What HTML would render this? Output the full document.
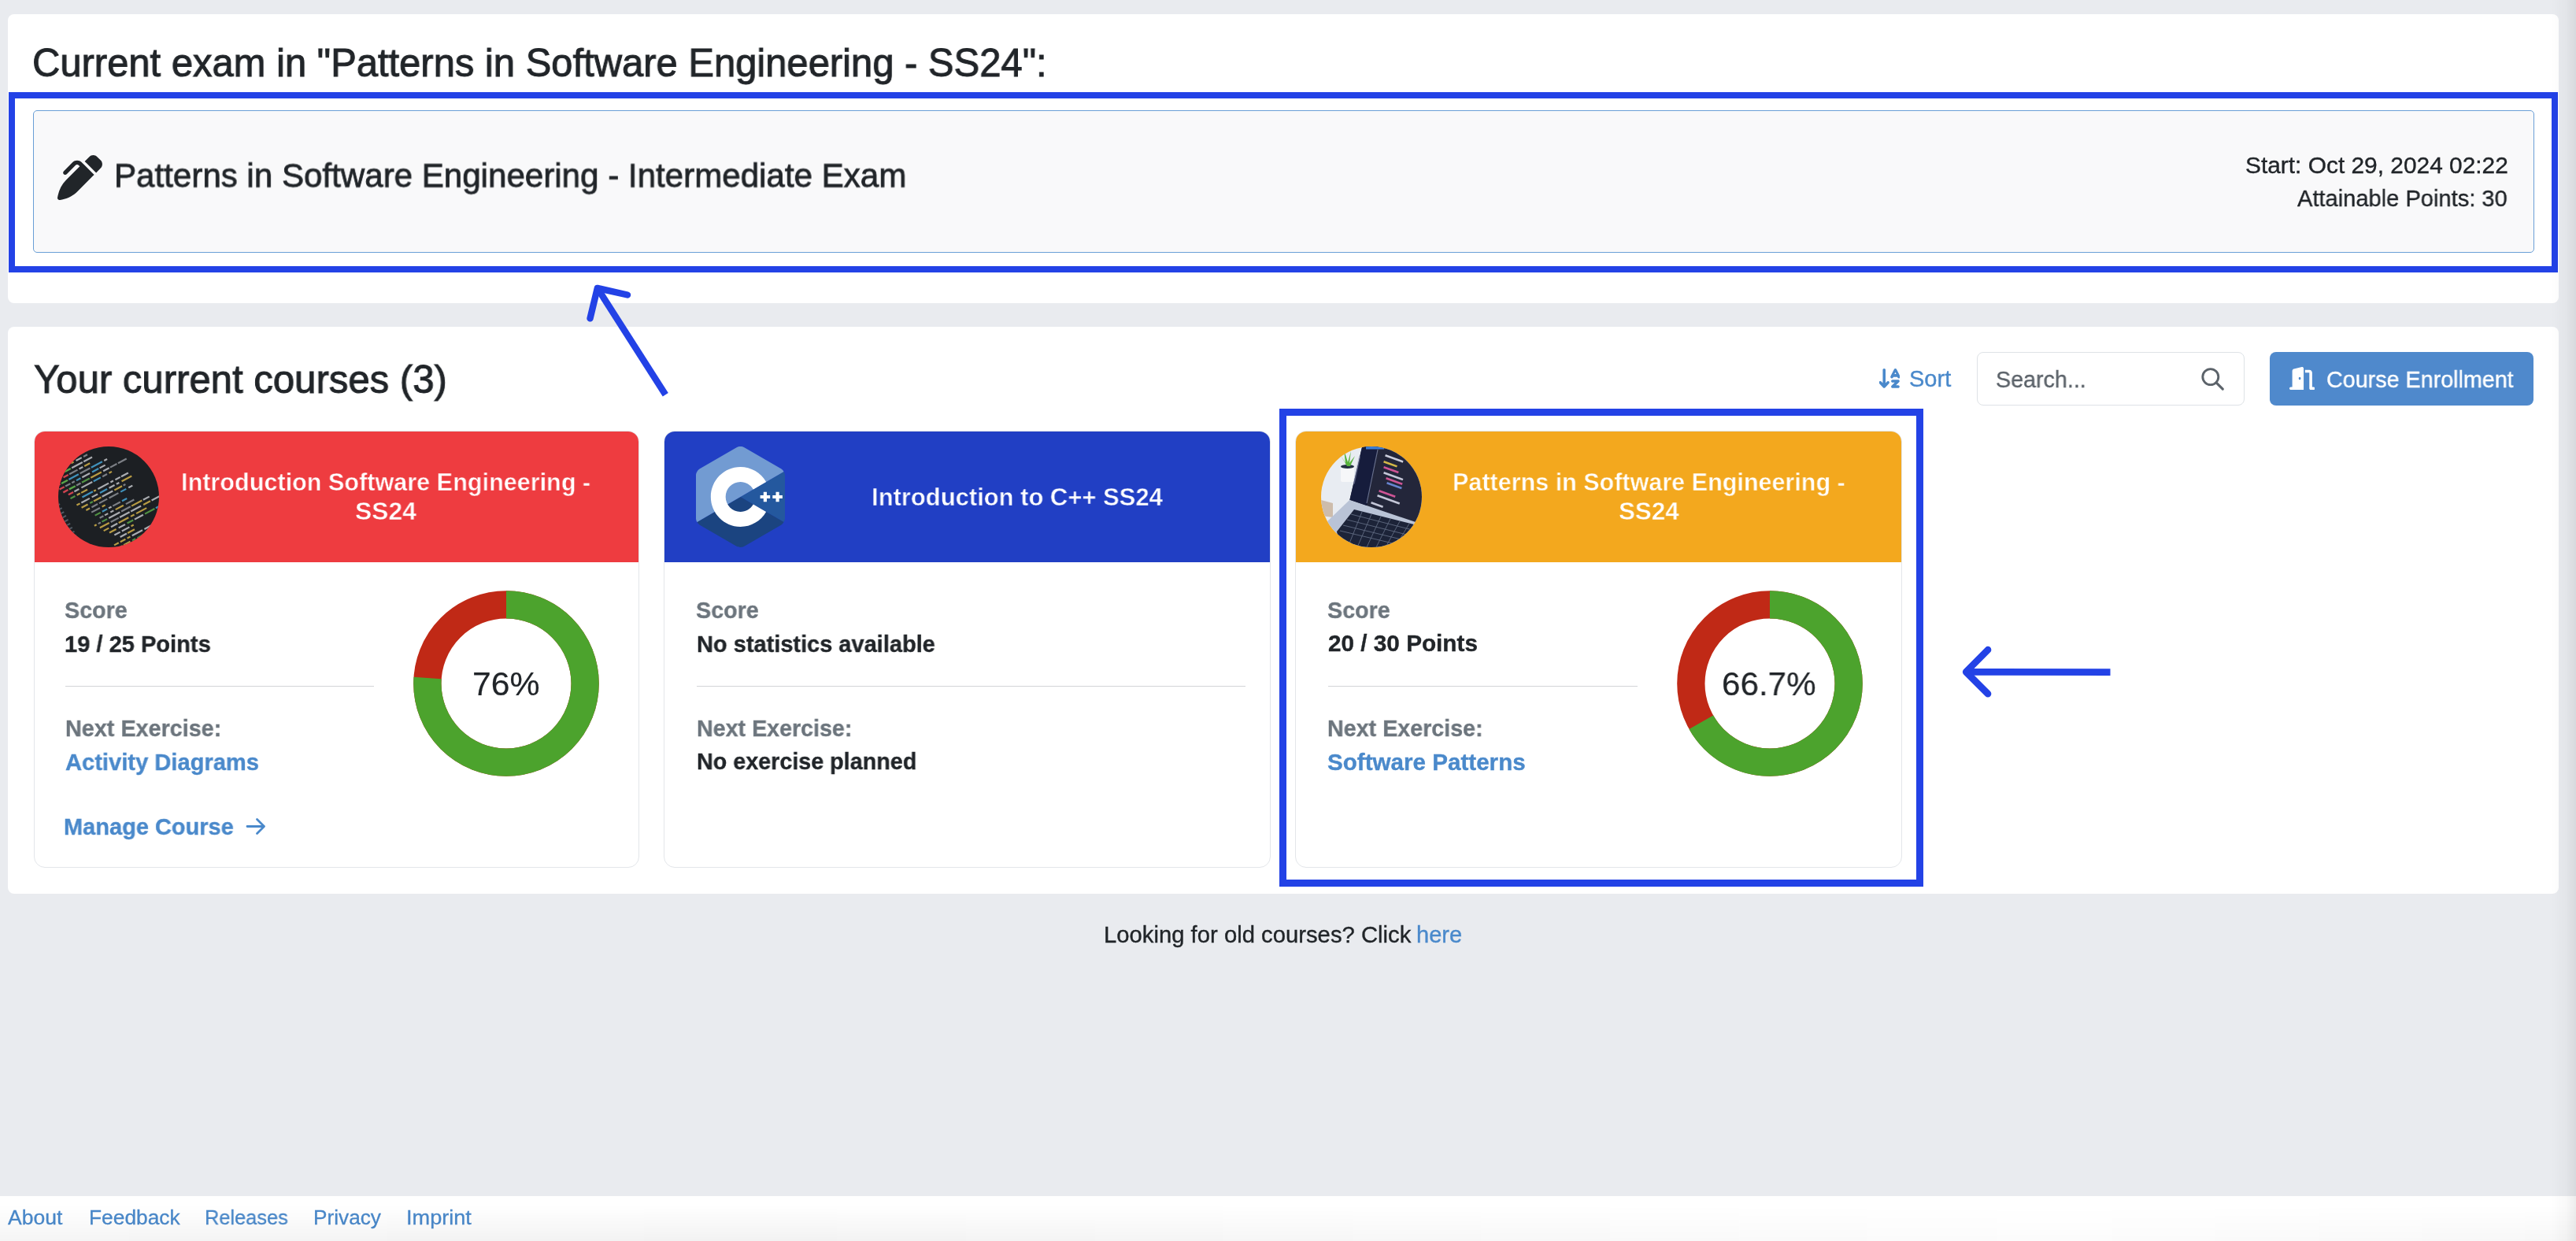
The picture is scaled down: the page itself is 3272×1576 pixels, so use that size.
<!DOCTYPE html><html><head><meta charset="utf-8"><style>
html,body{margin:0;padding:0;}
body{width:3272px;height:1576px;background:#e9ebef;position:relative;overflow:hidden;font-family:"Liberation Sans",sans-serif;}
.a{position:absolute;box-sizing:border-box;}
.t{position:absolute;white-space:nowrap;will-change:transform;}
</style></head><body>
<div class="a" style="left:9.9px;top:17.6px;width:3240.1px;height:367.2px;background:#fff;border-radius:8px"></div>
<div class="a" style="left:9.9px;top:415px;width:3240.1px;height:720px;background:#fff;border-radius:8px"></div>
<div class="t" style="left:41.12px;top:50.79px;font-size:50.50px;line-height:58.02px;-webkit-text-stroke:1.00px #212529;color:#212529;transform:scale(0.9690,1.0000);transform-origin:0 46.51px;">Current exam in "Patterns in Software Engineering - SS24":</div>
<div class="a" style="left:41.5px;top:140px;width:3177px;height:181px;background:#f9f9fa;border:1.3px solid #6a9fd6;border-radius:5px"></div>
<div class="a" style="left:11px;top:117px;width:3238px;height:229.3px;border:8.8px solid #2342e6"></div>
<svg class="a" style="left:73px;top:196.5px" width="57" height="57" viewBox="0 0 512 512"><path fill="#212529" d="M453.3 19.3l39.4 39.4c25 25 25 65.5 0 90.5l-52.1 52.1-1-1-16-16-96-96-17-17 52.1-52.1c25-25 65.5-25 90.5 0zM241 114.9c-9.4-9.4-24.6-9.4-33.9 0L105 217c-9.4 9.4-24.6 9.4-33.9 0s-9.4-24.6 0-33.9L173.1 81c28.1-28.1 73.7-28.1 101.8 0L288 94.1l17 17 96 96 16 16 1 1-17 17L229.5 412.5c-48 48-109.2 80.8-175.8 94.1l-25 5c-7.9 1.6-16-.9-21.7-6.6s-8.1-13.8-6.6-21.7l5-25c13.3-66.6 46.1-127.8 94.1-175.8L254.1 128 241 114.9z"/></svg>
<div class="t" style="left:145.18px;top:198.76px;font-size:42.50px;line-height:48.83px;-webkit-text-stroke:0.80px #212529;color:#212529;transform:scale(0.9906,1.0150);transform-origin:0 39.14px;">Patterns in Software Engineering - Intermediate Exam</div>
<div class="t" style="left:2851.82px;top:192.63px;font-size:29.50px;line-height:33.90px;-webkit-text-stroke:0.35px #212529;color:#212529;transform:scale(1.0128,1.0000);transform-origin:0 27.17px;">Start: Oct 29, 2024 02:22</div>
<div class="t" style="left:2917.76px;top:234.73px;font-size:29.50px;line-height:33.90px;-webkit-text-stroke:0.35px #212529;color:#212529;transform:scale(0.9856,1.0000);transform-origin:0 27.17px;">Attainable Points: 30</div>
<div class="t" style="left:42.76px;top:453.09px;font-size:50.50px;line-height:58.02px;-webkit-text-stroke:1.00px #212529;color:#212529;transform:scale(0.9723,1.0000);transform-origin:0 46.51px;">Your current courses (3)</div>
<svg class="a" style="left:2386.8px;top:468px" width="26.5" height="24.8" viewBox="48 32 477 448" preserveAspectRatio="none"><path fill="#4a89cb" d="M183.6 469.6C177.5 476.2 169 480 160 480s-17.5-3.8-23.6-10.4l-88-96c-11.9-13-11.1-33.3 2-45.2s33.3-11.1 45.2 2L128 365.7 128 64c0-17.7 14.3-32 32-32s32 14.3 32 32l0 301.7 32.4-35.4c11.9-13 32.2-13.9 45.2-2s13.9 32.2 2 45.2l-88 96zM320 320c0-17.7 14.3-32 32-32l128 0c12.9 0 24.6 7.8 29.6 19.8s2.2 25.7-6.9 34.9L429.3 416l50.7 0c17.7 0 32 14.3 32 32s-14.3 32-32 32l-128 0c-12.9 0-24.6-7.8-29.6-19.8s-2.2-25.7 6.9-34.9L402.7 352 352 352c-17.7 0-32-14.3-32-32zM416 32c12.1 0 23.2 6.8 28.6 17.7l64 128 16 32c7.9 15.8 1.5 35-14.3 42.9s-35 1.5-42.9-14.3L460.2 224l-88.4 0-7.2 14.3c-7.9 15.8-27.1 22.2-42.9 14.3s-22.2-27.1-14.3-42.9l16-32 64-128C392.8 38.8 403.9 32 416 32zM395.8 160l40.4 0L416 119.6 395.8 160z"/></svg>
<div class="t" style="left:2425.20px;top:464.99px;font-size:29.00px;line-height:33.32px;-webkit-text-stroke:0.35px #4a89cb;color:#4a89cb;transform:scale(0.9914,1.0000);transform-origin:0 26.71px;">Sort</div>
<div class="a" style="left:2511px;top:447px;width:340px;height:68px;background:#fff;border:1.5px solid #dee2e6;border-radius:8px"></div>
<div class="t" style="left:2535.30px;top:464.83px;font-size:29.50px;line-height:33.90px;-webkit-text-stroke:0.35px #5c636a;color:#5c636a;transform:scale(0.9719,1.0000);transform-origin:0 27.17px;">Search...</div>
<svg class="a" style="left:2794px;top:464.5px" width="34" height="34" viewBox="0 0 34 34"><circle cx="13.8" cy="13.6" r="10" fill="none" stroke="#5c636a" stroke-width="2.9"/><line x1="21" y1="20.8" x2="29.3" y2="29.1" stroke="#5c636a" stroke-width="3.1" stroke-linecap="round"/></svg>
<div class="a" style="left:2883px;top:447px;width:335px;height:68px;background:#4f89cc;border-radius:8px"></div>
<svg class="a" style="left:2907.5px;top:466px" width="32.5" height="29" viewBox="0 0 576 512" preserveAspectRatio="none"><path fill="#fff" d="M320 32c0-9.9-4.5-19.2-12.3-25.2S289.8-1.4 280.2 1l-179.9 45C79 51.3 64 70.5 64 92.5L64 448l-32 0c-17.7 0-32 14.3-32 32s14.3 32 32 32l64 0 192 0 32 0 0-32 0-448zM256 256c0 17.7-10.7 32-24 32s-24-14.3-24-32s10.7-32 24-32s24 14.3 24 32zm96-128l96 0 0 352c0 17.7 14.3 32 32 32l64 0c17.7 0 32-14.3 32-32s-14.3-32-32-32l-32 0 0-320c0-35.3-28.7-64-64-64l-96 0 0 64z"/></svg>
<div class="t" style="left:2954.68px;top:464.83px;font-size:29.50px;line-height:33.90px;-webkit-text-stroke:0.35px #fff;color:#fff;transform:scale(0.9730,1.0000);transform-origin:0 27.17px;">Course Enrollment</div>
<div class="a" style="left:42.6px;top:546.7px;width:769.0px;height:555.8px;border:1.4px solid #e3e6ea;border-radius:14px;background:#fff;overflow:hidden"><div style="position:absolute;left:-1.4px;top:-1.4px;right:-1.4px;height:167.5px;background:#ee3c40"></div></div>
<div class="a" style="left:843.4px;top:546.7px;width:770.6px;height:555.8px;border:1.4px solid #e3e6ea;border-radius:14px;background:#fff;overflow:hidden"><div style="position:absolute;left:-1.4px;top:-1.4px;right:-1.4px;height:167.5px;background:#213fc4"></div></div>
<div class="a" style="left:1645.4px;top:546.7px;width:770.2px;height:555.8px;border:1.4px solid #e3e6ea;border-radius:14px;background:#fff;overflow:hidden"><div style="position:absolute;left:-1.4px;top:-1.4px;right:-1.4px;height:167.5px;background:#f3a81e"></div></div>
<div class="t" style="left:229.98px;top:594.43px;font-size:32.00px;line-height:36.77px;font-weight:700;-webkit-text-stroke:0.45px #ee3c40;color:#fff;transform:scale(0.9562,1.0000);transform-origin:0 29.47px;">Introduction Software Engineering -</div>
<div class="t" style="left:451.06px;top:631.43px;font-size:32.00px;line-height:36.77px;font-weight:700;-webkit-text-stroke:0.45px #ee3c40;color:#fff;transform:scale(0.9931,1.0000);transform-origin:0 29.47px;">SS24</div>
<div class="t" style="left:81.68px;top:758.13px;font-size:29.50px;line-height:33.90px;font-weight:700;-webkit-text-stroke:0.35px #6c757d;color:#6c757d;transform:scale(0.9735,1.0000);transform-origin:0 27.17px;">Score</div>
<div class="t" style="left:81.68px;top:800.83px;font-size:29.50px;line-height:33.90px;font-weight:700;-webkit-text-stroke:0.35px #212529;color:#212529;transform:scale(0.9851,1.0000);transform-origin:0 27.17px;">19 / 25 Points</div>
<div class="a" style="left:82.5px;top:870.9px;width:392.4px;height:1.1px;background:#d3d4d8"></div>
<div class="t" style="left:82.58px;top:907.83px;font-size:29.50px;line-height:33.90px;font-weight:700;-webkit-text-stroke:0.35px #6c757d;color:#6c757d;transform:scale(0.9751,1.0000);transform-origin:0 27.17px;">Next Exercise:</div>
<div class="t" style="left:82.52px;top:950.53px;font-size:29.50px;line-height:33.90px;font-weight:700;-webkit-text-stroke:0.35px #4a89cb;color:#4a89cb;transform:scale(0.9872,1.0000);transform-origin:0 27.17px;">Activity Diagrams</div>
<div class="t" style="left:80.98px;top:1032.63px;font-size:29.50px;line-height:33.90px;font-weight:700;-webkit-text-stroke:0.35px #4a89cb;color:#4a89cb;transform:scale(0.9825,1.0000);transform-origin:0 27.17px;">Manage Course</div>
<svg class="a" style="left:311px;top:1036.5px" width="28" height="25" viewBox="0 0 28 25"><path d="M3 12.5H24.5M15.5 3.5L24.5 12.5L15.5 21.5" fill="none" stroke="#4a89cb" stroke-width="2.8" stroke-linecap="round" stroke-linejoin="round"/></svg>
<div class="t" style="left:1107.40px;top:612.83px;font-size:32.00px;line-height:36.77px;font-weight:700;-webkit-text-stroke:0.45px #213fc4;color:#fff;transform:scale(0.9673,1.0000);transform-origin:0 29.47px;">Introduction to C++ SS24</div>
<div class="t" style="left:884.06px;top:757.93px;font-size:29.50px;line-height:33.90px;font-weight:700;-webkit-text-stroke:0.35px #6c757d;color:#6c757d;transform:scale(0.9735,1.0000);transform-origin:0 27.17px;">Score</div>
<div class="t" style="left:884.96px;top:800.83px;font-size:29.50px;line-height:33.90px;font-weight:700;-webkit-text-stroke:0.35px #212529;color:#212529;transform:scale(0.9824,1.0000);transform-origin:0 27.17px;">No statistics available</div>
<div class="a" style="left:884.5px;top:870.9px;width:697.4px;height:1.1px;background:#d3d4d8"></div>
<div class="t" style="left:884.96px;top:907.63px;font-size:29.50px;line-height:33.90px;font-weight:700;-webkit-text-stroke:0.35px #6c757d;color:#6c757d;transform:scale(0.9707,1.0000);transform-origin:0 27.17px;">Next Exercise:</div>
<div class="t" style="left:884.96px;top:950.33px;font-size:29.50px;line-height:33.90px;font-weight:700;-webkit-text-stroke:0.35px #212529;color:#212529;transform:scale(0.9734,1.0000);transform-origin:0 27.17px;">No exercise planned</div>
<div class="t" style="left:1845.26px;top:594.03px;font-size:32.00px;line-height:36.77px;font-weight:700;-webkit-text-stroke:0.45px #f3a81e;color:#fff;transform:scale(0.9540,1.0000);transform-origin:0 29.47px;">Patterns in Software Engineering -</div>
<div class="t" style="left:2056.06px;top:631.43px;font-size:32.00px;line-height:36.77px;font-weight:700;-webkit-text-stroke:0.45px #f3a81e;color:#fff;transform:scale(0.9785,1.0000);transform-origin:0 29.47px;">SS24</div>
<div class="t" style="left:1686.06px;top:758.23px;font-size:29.50px;line-height:33.90px;font-weight:700;-webkit-text-stroke:0.35px #6c757d;color:#6c757d;transform:scale(0.9735,1.0000);transform-origin:0 27.17px;">Score</div>
<div class="t" style="left:1687.24px;top:800.43px;font-size:29.50px;line-height:33.90px;font-weight:700;-webkit-text-stroke:0.35px #212529;color:#212529;transform:scale(1.0074,1.0000);transform-origin:0 27.17px;">20 / 30 Points</div>
<div class="a" style="left:1686.5px;top:870.9px;width:393.4px;height:1.1px;background:#d3d4d8"></div>
<div class="t" style="left:1686.44px;top:907.73px;font-size:29.50px;line-height:33.90px;font-weight:700;-webkit-text-stroke:0.35px #6c757d;color:#6c757d;transform:scale(0.9719,1.0000);transform-origin:0 27.17px;">Next Exercise:</div>
<div class="t" style="left:1686.06px;top:950.53px;font-size:29.50px;line-height:33.90px;font-weight:700;-webkit-text-stroke:0.35px #4a89cb;color:#4a89cb;transform:scale(1.0034,1.0000);transform-origin:0 27.17px;">Software Patterns</div>
<svg class="a" style="left:518.3px;top:743.1px" width="250" height="250" viewBox="0 0 250 250"><circle cx="125" cy="125" r="100.15" fill="none" stroke="#c02916" stroke-width="35.3"/><circle cx="125" cy="125" r="100.15" fill="none" stroke="#4ca32d" stroke-width="35.3" stroke-dasharray="478.24 629.26" transform="rotate(-90 125 125)"/></svg>
<svg class="a" style="left:2123.2px;top:743.1px" width="250" height="250" viewBox="0 0 250 250"><circle cx="125" cy="125" r="100.15" fill="none" stroke="#c02916" stroke-width="35.3"/><circle cx="125" cy="125" r="100.15" fill="none" stroke="#4ca32d" stroke-width="35.3" stroke-dasharray="419.72 629.26" transform="rotate(-90 125 125)"/></svg>
<div class="t" style="left:600.40px;top:845.46px;font-size:42.50px;line-height:48.83px;-webkit-text-stroke:0.20px #212529;color:#212529;transform:scale(1.0068,1.0000);transform-origin:0 39.14px;">76%</div>
<div class="t" style="left:2186.88px;top:845.46px;font-size:42.50px;line-height:48.83px;-webkit-text-stroke:0.20px #212529;color:#212529;transform:scale(0.9925,1.0000);transform-origin:0 39.14px;">66.7%</div>
<svg class="a" style="left:73.5px;top:567.2px" width="128" height="128" viewBox="0 0 128 128"><defs><clipPath id="c1"><circle cx="64" cy="64" r="64"/></clipPath></defs><g clip-path="url(#c1)"><rect width="128" height="128" fill="#1c1f23"/><g transform="rotate(-28 64 64) translate(-6 -10)"><rect x="6" y="-4.0" width="5" height="2" fill="#6b7480" opacity="0.7"/><rect x="17.4" y="-4.0" width="14.1" height="2.2" fill="#d2b24a" opacity="0.85"/><rect x="33.7" y="-4.0" width="14.1" height="2.2" fill="#8d9196" opacity="0.85"/><rect x="49.5" y="-4.0" width="9.7" height="2.2" fill="#46a6d6" opacity="0.85"/><rect x="62.2" y="-4.0" width="4.2" height="2.2" fill="#8d9196" opacity="0.85"/><rect x="67.9" y="-4.0" width="10.0" height="2.2" fill="#c3c6ca" opacity="0.85"/><rect x="80.5" y="-4.0" width="8.2" height="2.2" fill="#d2b24a" opacity="0.85"/><rect x="6" y="1.6" width="5" height="2" fill="#6b7480" opacity="0.7"/><rect x="20.3" y="1.6" width="11.1" height="2.2" fill="#5aa84a" opacity="0.85"/><rect x="32.8" y="1.6" width="3.5" height="2.2" fill="#8d9196" opacity="0.85"/><rect x="38.8" y="1.6" width="13.1" height="2.2" fill="#d2b24a" opacity="0.85"/><rect x="6" y="7.2" width="5" height="2" fill="#6b7480" opacity="0.7"/><rect x="23.5" y="7.2" width="7" height="2.3" fill="#cf4450"/><rect x="32.0" y="7.2" width="9" height="2.3" fill="#5aa84a"/><rect x="42.5" y="7.2" width="6.0" height="2.2" fill="#8d9196" opacity="0.85"/><rect x="50.9" y="7.2" width="11.6" height="2.2" fill="#d2b24a" opacity="0.85"/><rect x="65.2" y="7.2" width="8.3" height="2.2" fill="#5aa84a" opacity="0.85"/><rect x="77.0" y="7.2" width="13.9" height="2.2" fill="#8d9196" opacity="0.85"/><rect x="92.9" y="7.2" width="6.0" height="2.2" fill="#8d9196" opacity="0.85"/><rect x="100.1" y="7.2" width="10.3" height="2.2" fill="#c3c6ca" opacity="0.85"/><rect x="6" y="12.8" width="5" height="2" fill="#6b7480" opacity="0.7"/><rect x="26.0" y="12.8" width="7" height="2.3" fill="#cf4450"/><rect x="34.5" y="12.8" width="3.9" height="2.2" fill="#c3c6ca" opacity="0.85"/><rect x="41.6" y="12.8" width="3.0" height="2.2" fill="#8d9196" opacity="0.85"/><rect x="47.9" y="12.8" width="3.7" height="2.2" fill="#d2b24a" opacity="0.85"/><rect x="55.0" y="12.8" width="8.2" height="2.2" fill="#c3c6ca" opacity="0.85"/><rect x="65.7" y="12.8" width="5.6" height="2.2" fill="#8d9196" opacity="0.85"/><rect x="6" y="18.4" width="5" height="2" fill="#6b7480" opacity="0.7"/><rect x="26.9" y="18.4" width="7" height="2.3" fill="#cf4450"/><rect x="35.4" y="18.4" width="9" height="2.3" fill="#5aa84a"/><rect x="45.9" y="18.4" width="15.5" height="2.2" fill="#c3c6ca" opacity="0.85"/><rect x="63.0" y="18.4" width="12.2" height="2.2" fill="#c3c6ca" opacity="0.85"/><rect x="6" y="24.0" width="5" height="2" fill="#6b7480" opacity="0.7"/><rect x="30.9" y="24.0" width="7" height="2.3" fill="#cf4450"/><rect x="39.4" y="24.0" width="11.9" height="2.2" fill="#8d9196" opacity="0.85"/><rect x="53.5" y="24.0" width="5.5" height="2.2" fill="#c3c6ca" opacity="0.85"/><rect x="61.1" y="24.0" width="8.0" height="2.2" fill="#d2b24a" opacity="0.85"/><rect x="6" y="29.6" width="5" height="2" fill="#6b7480" opacity="0.7"/><rect x="16.6" y="29.6" width="7" height="2.3" fill="#cf4450"/><rect x="25.1" y="29.6" width="9" height="2.3" fill="#5aa84a"/><rect x="35.6" y="29.6" width="14.2" height="2.2" fill="#46a6d6" opacity="0.85"/><rect x="51.8" y="29.6" width="14.5" height="2.2" fill="#8d9196" opacity="0.85"/><rect x="67.9" y="29.6" width="15.9" height="2.2" fill="#46a6d6" opacity="0.85"/><rect x="86.5" y="29.6" width="4.3" height="2.2" fill="#c3c6ca" opacity="0.85"/><rect x="6" y="35.2" width="5" height="2" fill="#6b7480" opacity="0.7"/><rect x="19.3" y="35.2" width="7" height="2.3" fill="#cf4450"/><rect x="27.8" y="35.2" width="7.3" height="2.2" fill="#8d9196" opacity="0.85"/><rect x="37.1" y="35.2" width="4.0" height="2.2" fill="#8d9196" opacity="0.85"/><rect x="43.6" y="35.2" width="6.2" height="2.2" fill="#46a6d6" opacity="0.85"/><rect x="51.9" y="35.2" width="11.1" height="2.2" fill="#c3c6ca" opacity="0.85"/><rect x="66.3" y="35.2" width="9.3" height="2.2" fill="#46a6d6" opacity="0.85"/><rect x="77.1" y="35.2" width="8.0" height="2.2" fill="#c3c6ca" opacity="0.85"/><rect x="6" y="40.8" width="5" height="2" fill="#6b7480" opacity="0.7"/><rect x="21.7" y="40.8" width="7" height="2.3" fill="#cf4450"/><rect x="30.2" y="40.8" width="9" height="2.3" fill="#5aa84a"/><rect x="40.7" y="40.8" width="6.2" height="2.2" fill="#8d9196" opacity="0.85"/><rect x="48.5" y="40.8" width="11.2" height="2.2" fill="#5aa84a" opacity="0.85"/><rect x="61.3" y="40.8" width="15.4" height="2.2" fill="#d2b24a" opacity="0.85"/><rect x="79.3" y="40.8" width="8.5" height="2.2" fill="#c3c6ca" opacity="0.85"/><rect x="89.2" y="40.8" width="9.7" height="2.2" fill="#8d9196" opacity="0.85"/><rect x="100.6" y="40.8" width="12.2" height="2.2" fill="#8d9196" opacity="0.85"/><rect x="6" y="46.4" width="5" height="2" fill="#6b7480" opacity="0.7"/><rect x="26.2" y="46.4" width="7" height="2.3" fill="#cf4450"/><rect x="34.7" y="46.4" width="6.8" height="2.2" fill="#c3c6ca" opacity="0.85"/><rect x="44.9" y="46.4" width="15.7" height="2.2" fill="#c3c6ca" opacity="0.85"/><rect x="62.3" y="46.4" width="10.3" height="2.2" fill="#46a6d6" opacity="0.85"/><rect x="75.2" y="46.4" width="6.6" height="2.2" fill="#8d9196" opacity="0.85"/><rect x="84.7" y="46.4" width="3.9" height="2.2" fill="#d2b24a" opacity="0.85"/><rect x="6" y="52.0" width="5" height="2" fill="#6b7480" opacity="0.7"/><rect x="26.2" y="52.0" width="6.7" height="2.2" fill="#5aa84a" opacity="0.85"/><rect x="35.4" y="52.0" width="4.7" height="2.2" fill="#d2b24a" opacity="0.85"/><rect x="41.6" y="52.0" width="8.9" height="2.2" fill="#d2b24a" opacity="0.85"/><rect x="6" y="57.6" width="5" height="2" fill="#6b7480" opacity="0.7"/><rect x="40.1" y="57.6" width="15.3" height="2.2" fill="#46a6d6" opacity="0.85"/><rect x="56.7" y="57.6" width="3.2" height="2.2" fill="#d2b24a" opacity="0.85"/><rect x="62.7" y="57.6" width="15.5" height="2.2" fill="#c3c6ca" opacity="0.85"/><rect x="80.8" y="57.6" width="4.0" height="2.2" fill="#c3c6ca" opacity="0.85"/><rect x="87.7" y="57.6" width="7.1" height="2.2" fill="#c3c6ca" opacity="0.85"/><rect x="96.2" y="57.6" width="10.1" height="2.2" fill="#c3c6ca" opacity="0.85"/><rect x="6" y="63.2" width="5" height="2" fill="#6b7480" opacity="0.7"/><rect x="29.2" y="63.2" width="4.7" height="2.2" fill="#d2b24a" opacity="0.85"/><rect x="35.9" y="63.2" width="11.9" height="2.2" fill="#c3c6ca" opacity="0.85"/><rect x="51.0" y="63.2" width="8.4" height="2.2" fill="#c3c6ca" opacity="0.85"/><rect x="62.6" y="63.2" width="10.4" height="2.2" fill="#46a6d6" opacity="0.85"/><rect x="75.8" y="63.2" width="7.9" height="2.2" fill="#c3c6ca" opacity="0.85"/><rect x="86.3" y="63.2" width="4.0" height="2.2" fill="#c3c6ca" opacity="0.85"/><rect x="93.9" y="63.2" width="14.4" height="2.2" fill="#d2b24a" opacity="0.85"/><rect x="6" y="68.8" width="5" height="2" fill="#6b7480" opacity="0.7"/><rect x="33.2" y="68.8" width="9.0" height="2.2" fill="#d2b24a" opacity="0.85"/><rect x="45.3" y="68.8" width="4.1" height="2.2" fill="#5aa84a" opacity="0.85"/><rect x="50.6" y="68.8" width="10.8" height="2.2" fill="#d2b24a" opacity="0.85"/><rect x="62.7" y="68.8" width="15.4" height="2.2" fill="#c3c6ca" opacity="0.85"/><rect x="80.5" y="68.8" width="11.0" height="2.2" fill="#d2b24a" opacity="0.85"/><rect x="93.3" y="68.8" width="3.1" height="2.2" fill="#8d9196" opacity="0.85"/><rect x="6" y="74.4" width="5" height="2" fill="#6b7480" opacity="0.7"/><rect x="36.8" y="74.4" width="5.2" height="2.2" fill="#d2b24a" opacity="0.85"/><rect x="44.8" y="74.4" width="8.7" height="2.2" fill="#8d9196" opacity="0.85"/><rect x="55.5" y="74.4" width="11.7" height="2.2" fill="#8d9196" opacity="0.85"/><rect x="69.8" y="74.4" width="13.4" height="2.2" fill="#8d9196" opacity="0.85"/><rect x="86.4" y="74.4" width="8.0" height="2.2" fill="#46a6d6" opacity="0.85"/><rect x="97.8" y="74.4" width="5.7" height="2.2" fill="#c3c6ca" opacity="0.85"/><rect x="6" y="80.0" width="5" height="2" fill="#6b7480" opacity="0.7"/><rect x="41.5" y="80.0" width="12.2" height="2.2" fill="#8d9196" opacity="0.85"/><rect x="56.8" y="80.0" width="4.5" height="2.2" fill="#d2b24a" opacity="0.85"/><rect x="6" y="85.6" width="5" height="2" fill="#6b7480" opacity="0.7"/><rect x="43.6" y="85.6" width="8.0" height="2.2" fill="#5aa84a" opacity="0.85"/><rect x="54.0" y="85.6" width="7.1" height="2.2" fill="#46a6d6" opacity="0.85"/><rect x="63.3" y="85.6" width="4.0" height="2.2" fill="#c3c6ca" opacity="0.85"/><rect x="69.1" y="85.6" width="10.9" height="2.2" fill="#8d9196" opacity="0.85"/><rect x="82.5" y="85.6" width="7.0" height="2.2" fill="#46a6d6" opacity="0.85"/><rect x="6" y="91.2" width="5" height="2" fill="#6b7480" opacity="0.7"/><rect x="47.4" y="91.2" width="5.5" height="2.2" fill="#8d9196" opacity="0.85"/><rect x="54.6" y="91.2" width="4.8" height="2.2" fill="#c3c6ca" opacity="0.85"/><rect x="62.9" y="91.2" width="4.5" height="2.2" fill="#c3c6ca" opacity="0.85"/><rect x="70.1" y="91.2" width="11.5" height="2.2" fill="#d2b24a" opacity="0.85"/><rect x="85.0" y="91.2" width="11.9" height="2.2" fill="#8d9196" opacity="0.85"/><rect x="6" y="96.8" width="5" height="2" fill="#6b7480" opacity="0.7"/><rect x="36.8" y="96.8" width="3.1" height="2.2" fill="#d2b24a" opacity="0.85"/><rect x="42.3" y="96.8" width="3.5" height="2.2" fill="#8d9196" opacity="0.85"/><rect x="47.6" y="96.8" width="7.5" height="2.2" fill="#5aa84a" opacity="0.85"/><rect x="57.5" y="96.8" width="16.0" height="2.2" fill="#c3c6ca" opacity="0.85"/><rect x="75.5" y="96.8" width="13.3" height="2.2" fill="#8d9196" opacity="0.85"/><rect x="90.2" y="96.8" width="15.1" height="2.2" fill="#d2b24a" opacity="0.85"/><rect x="106.9" y="96.8" width="8.9" height="2.2" fill="#c3c6ca" opacity="0.85"/><rect x="6" y="102.4" width="5" height="2" fill="#6b7480" opacity="0.7"/><rect x="41.7" y="102.4" width="13.4" height="2.2" fill="#d2b24a" opacity="0.85"/><rect x="57.3" y="102.4" width="11.5" height="2.2" fill="#8d9196" opacity="0.85"/><rect x="70.2" y="102.4" width="14.3" height="2.2" fill="#c3c6ca" opacity="0.85"/><rect x="86.2" y="102.4" width="14.7" height="2.2" fill="#c3c6ca" opacity="0.85"/><rect x="104.3" y="102.4" width="10.0" height="2.2" fill="#d2b24a" opacity="0.85"/><rect x="116.1" y="102.4" width="12.3" height="2.2" fill="#c3c6ca" opacity="0.85"/><rect x="6" y="108.0" width="5" height="2" fill="#6b7480" opacity="0.7"/><rect x="44.2" y="108.0" width="7.4" height="2.2" fill="#d2b24a" opacity="0.85"/><rect x="54.7" y="108.0" width="9.3" height="2.2" fill="#c3c6ca" opacity="0.85"/><rect x="65.7" y="108.0" width="14.3" height="2.2" fill="#d2b24a" opacity="0.85"/><rect x="83.0" y="108.0" width="5.2" height="2.2" fill="#d2b24a" opacity="0.85"/><rect x="91.0" y="108.0" width="14.9" height="2.2" fill="#d2b24a" opacity="0.85"/><rect x="6" y="113.6" width="5" height="2" fill="#6b7480" opacity="0.7"/><rect x="49.5" y="113.6" width="9.7" height="2.2" fill="#d2b24a" opacity="0.85"/><rect x="62.7" y="113.6" width="9.4" height="2.2" fill="#c3c6ca" opacity="0.85"/><rect x="75.0" y="113.6" width="8.7" height="2.2" fill="#5aa84a" opacity="0.85"/><rect x="85.6" y="113.6" width="12.5" height="2.2" fill="#c3c6ca" opacity="0.85"/><rect x="100.5" y="113.6" width="14.0" height="2.2" fill="#5aa84a" opacity="0.85"/><rect x="116.2" y="113.6" width="11.7" height="2.2" fill="#46a6d6" opacity="0.85"/><rect x="129.6" y="113.6" width="14.1" height="2.2" fill="#5aa84a" opacity="0.85"/><rect x="6" y="119.2" width="5" height="2" fill="#6b7480" opacity="0.7"/><rect x="53.7" y="119.2" width="8.3" height="2.2" fill="#c3c6ca" opacity="0.85"/><rect x="64.4" y="119.2" width="10.9" height="2.2" fill="#c3c6ca" opacity="0.85"/><rect x="77.7" y="119.2" width="3.6" height="2.2" fill="#d2b24a" opacity="0.85"/><rect x="6" y="124.8" width="5" height="2" fill="#6b7480" opacity="0.7"/><rect x="59.0" y="124.8" width="9.4" height="2.2" fill="#c3c6ca" opacity="0.85"/><rect x="69.7" y="124.8" width="10.0" height="2.2" fill="#d2b24a" opacity="0.85"/><rect x="6" y="130.4" width="5" height="2" fill="#6b7480" opacity="0.7"/><rect x="47.4" y="130.4" width="6.5" height="2.2" fill="#d2b24a" opacity="0.85"/><rect x="56.2" y="130.4" width="7.4" height="2.2" fill="#d2b24a" opacity="0.85"/><rect x="66.1" y="130.4" width="4.4" height="2.2" fill="#d2b24a" opacity="0.85"/><rect x="73.1" y="130.4" width="15.0" height="2.2" fill="#c3c6ca" opacity="0.85"/><rect x="90.9" y="130.4" width="15.7" height="2.2" fill="#c3c6ca" opacity="0.85"/><rect x="6" y="136.0" width="5" height="2" fill="#6b7480" opacity="0.7"/><rect x="49.7" y="136.0" width="6.7" height="2.2" fill="#d2b24a" opacity="0.85"/><rect x="58.1" y="136.0" width="9.5" height="2.2" fill="#d2b24a" opacity="0.85"/><rect x="70.5" y="136.0" width="4.6" height="2.2" fill="#5aa84a" opacity="0.85"/><rect x="77.7" y="136.0" width="12.3" height="2.2" fill="#5aa84a" opacity="0.85"/><rect x="93.3" y="136.0" width="3.3" height="2.2" fill="#d2b24a" opacity="0.85"/><rect x="99.7" y="136.0" width="11.0" height="2.2" fill="#5aa84a" opacity="0.85"/><rect x="112.4" y="136.0" width="11.2" height="2.2" fill="#8d9196" opacity="0.85"/></g></g></svg>
<svg class="a" style="left:1678.0px;top:567.2px" width="128" height="128" viewBox="0 0 128 128"><defs><clipPath id="c3"><circle cx="64" cy="64" r="64"/></clipPath></defs><g clip-path="url(#c3)"><rect width="128" height="128" fill="#e8ecf2"/><polygon points="0,68 15,72 15,90 0,88" fill="#cdbcab"/><rect x="25" y="25" width="17" height="20" rx="2" fill="#f6f7f9"/><ellipse cx="33.5" cy="25.5" rx="8.5" ry="2.6" fill="#243042"/><path d="M33 25 L24 10 L31 21 L29 4 L34 20 L38 6 L36 21 L43 12 L37 25 Z" fill="#58b43c"/><polygon points="7,96 36.4,67.8 128,98 128,128 8,128" fill="#b9c3d6"/><polygon points="20,108 42,80 118,99 108,128 24,128" fill="#1c2338"/><g stroke="#9aa7c0" stroke-width="0.9" opacity="0.55"><line x1="38" y1="86" x2="116" y2="106"/><line x1="33" y1="93" x2="113" y2="113"/><line x1="28" y1="100" x2="110" y2="120"/><line x1="24" y1="107" x2="108" y2="127"/><line x1="52" y1="83" x2="34" y2="128"/><line x1="64" y1="86" x2="46" y2="128"/><line x1="76" y1="89" x2="58" y2="128"/><line x1="88" y1="92" x2="70" y2="128"/><line x1="100" y1="95" x2="82" y2="128"/><line x1="112" y1="98" x2="94" y2="128"/></g><polygon points="52.7,-2 130,-2 130,101 119.4,95.8 36.4,67.8" fill="#23263a"/><polygon points="52.7,-2 73,-2 58,75 36.4,67.8" fill="#161c3c"/><polygon points="57,-2 81,-2 80,3.5 57,3.5" fill="#3d7fd6"/><line x1="72" y1="4" x2="58" y2="72" stroke="#8a93b0" stroke-width="1.2" opacity="0.7"/><g opacity="0.9"><rect x="82" y="10" width="24" height="2.6" fill="#dfe1ef" transform="rotate(20 82 10)"/><rect x="80" y="18" width="18" height="2.6" fill="#e8c94a" transform="rotate(20 80 18)"/><rect x="80" y="25" width="20" height="2.6" fill="#e25aa0" transform="rotate(20 80 25)"/><rect x="80" y="32" width="26" height="2.6" fill="#d6d9ea" transform="rotate(20 80 32)"/><rect x="83" y="39" width="22" height="2.6" fill="#e25aa0" transform="rotate(20 83 39)"/><rect x="84" y="45" width="20" height="2.6" fill="#6f8fe0" transform="rotate(20 84 45)"/><rect x="74" y="55" width="22" height="2.6" fill="#e25aa0" transform="rotate(20 74 55)"/><rect x="72" y="61" width="30" height="2.6" fill="#d6d9ea" transform="rotate(20 72 61)"/><rect x="64" y="70" width="16" height="2.6" fill="#d6d9ea" transform="rotate(20 64 70)"/><rect x="48" y="12" width="2.2" height="36" fill="#9aa0c0" opacity="0.5" transform="rotate(12 48 12)"/></g></g></svg>
<svg class="a" style="left:884px;top:567px" width="113" height="128" viewBox="0 0 306 344.35" preserveAspectRatio="none"><path fill="#24589e" d="M302.107,258.262c2.401-4.159,3.893-8.845,3.893-13.053V99.14c0-4.208-1.49-8.893-3.892-13.052L153,172.175L302.107,258.262z"/><path fill="#1b4480" d="M166.25,341.193l126.5-73.034c3.644-2.104,6.956-5.737,9.357-9.897L153,172.175L3.893,258.263c2.401,4.159,5.714,7.793,9.357,9.896l126.5,73.034C147.037,345.401,158.963,345.401,166.25,341.193z"/><path fill="#729bd2" d="M302.108,86.087c-2.402-4.16-5.715-7.793-9.358-9.897L166.25,3.156c-7.287-4.208-19.213-4.208-26.5,0L13.25,76.19C5.962,80.397,0,90.725,0,99.14v146.069c0,4.208,1.491,8.894,3.893,13.053L153,172.175L302.108,86.087z"/><path fill="#fff" d="M153,274.175c-56.243,0-102-45.757-102-102s45.757-102,102-102c36.292,0,70.139,19.53,88.331,50.968l-44.143,25.544c-9.105-15.736-26.038-25.512-44.188-25.512c-28.122,0-51,22.878-51,51c0,28.121,22.878,51,51,51c18.152,0,35.085-9.776,44.191-25.515l44.143,25.543C223.142,254.644,189.294,274.175,153,274.175z"/><polygon fill="#fff" points="255,166.508 243.666,166.508 243.666,155.175 232.334,155.175 232.334,166.508 221,166.508 221,177.841 232.334,177.841 232.334,189.175 243.666,189.175 243.666,177.841 255,177.841"/><polygon fill="#fff" points="297.5,166.508 286.166,166.508 286.166,155.175 274.834,155.175 274.834,166.508 263.5,166.508 263.5,177.841 274.834,177.841 274.834,189.175 286.166,189.175 286.166,177.841 297.5,177.841"/></svg>
<div class="a" style="left:1625px;top:519px;width:817.8px;height:607px;border:9px solid #2342e6"></div>
<svg class="a" style="left:0;top:0" width="3272" height="1576" viewBox="0 0 3272 1576"><g fill="none" stroke="#2342e6" stroke-width="8.4"><path d="M845.3 501.3 L760.5 368.5" stroke-linecap="butt"/><path d="M797 374.5 L758.8 365.9 L749.5 404.4" stroke-linecap="round" stroke-linejoin="round"/><path d="M2680.5 853.6 L2500 853.3" stroke-width="8.7" stroke-linecap="butt"/><path d="M2525 825.2 L2497.2 853.3 L2525 881.1" stroke-width="8.7" stroke-linecap="round" stroke-linejoin="round"/></g></svg>
<div class="t" style="left:1401.64px;top:1170.79px;font-size:29.00px;line-height:33.32px;-webkit-text-stroke:0.35px #212529;color:#212529;transform:scale(1.0089,1.0000);transform-origin:0 26.71px;">Looking for old courses? Click</div>
<div class="t" style="left:1798.74px;top:1170.79px;font-size:29.00px;line-height:33.32px;-webkit-text-stroke:0.35px #4a89cb;color:#4a89cb;transform:scale(1.0028,1.0000);transform-origin:0 26.71px;">here</div>
<div class="a" style="left:0;top:1519.4px;width:3272px;height:56.6px;background:#fff"></div>
<div class="t" style="left:10.24px;top:1532.25px;font-size:26.00px;line-height:29.87px;-webkit-text-stroke:0.31px #4a89cb;color:#4a89cb;transform:scale(1.0199,1.0000);transform-origin:0 23.95px;">About</div>
<div class="t" style="left:112.64px;top:1532.25px;font-size:26.00px;line-height:29.87px;-webkit-text-stroke:0.31px #4a89cb;color:#4a89cb;transform:scale(1.0129,1.0000);transform-origin:0 23.95px;">Feedback</div>
<div class="t" style="left:259.88px;top:1532.25px;font-size:26.00px;line-height:29.87px;-webkit-text-stroke:0.31px #4a89cb;color:#4a89cb;transform:scale(0.9753,1.0000);transform-origin:0 23.95px;">Releases</div>
<div class="t" style="left:397.88px;top:1532.25px;font-size:26.00px;line-height:29.87px;-webkit-text-stroke:0.31px #4a89cb;color:#4a89cb;transform:scale(1.0082,1.0000);transform-origin:0 23.95px;">Privacy</div>
<div class="t" style="left:516.40px;top:1532.25px;font-size:26.00px;line-height:29.87px;-webkit-text-stroke:0.31px #4a89cb;color:#4a89cb;transform:scale(1.0434,1.0000);transform-origin:0 23.95px;">Imprint</div>
<div class="a" style="left:0;top:1530px;width:3272px;height:46px;background:linear-gradient(to right, rgba(0,0,0,0.04), rgba(0,0,0,0.05) 30%, rgba(0,0,0,0.03) 55%, rgba(0,0,0,0.012) 80%, rgba(0,0,0,0.03));-webkit-mask-image:linear-gradient(to bottom, transparent, black)"></div>
<div class="a" style="left:3240px;top:0;width:32px;height:1576px;background:linear-gradient(to right, rgba(0,0,0,0), rgba(0,0,0,0.025) 60%, rgba(0,0,0,0.07))"></div>
</body></html>
